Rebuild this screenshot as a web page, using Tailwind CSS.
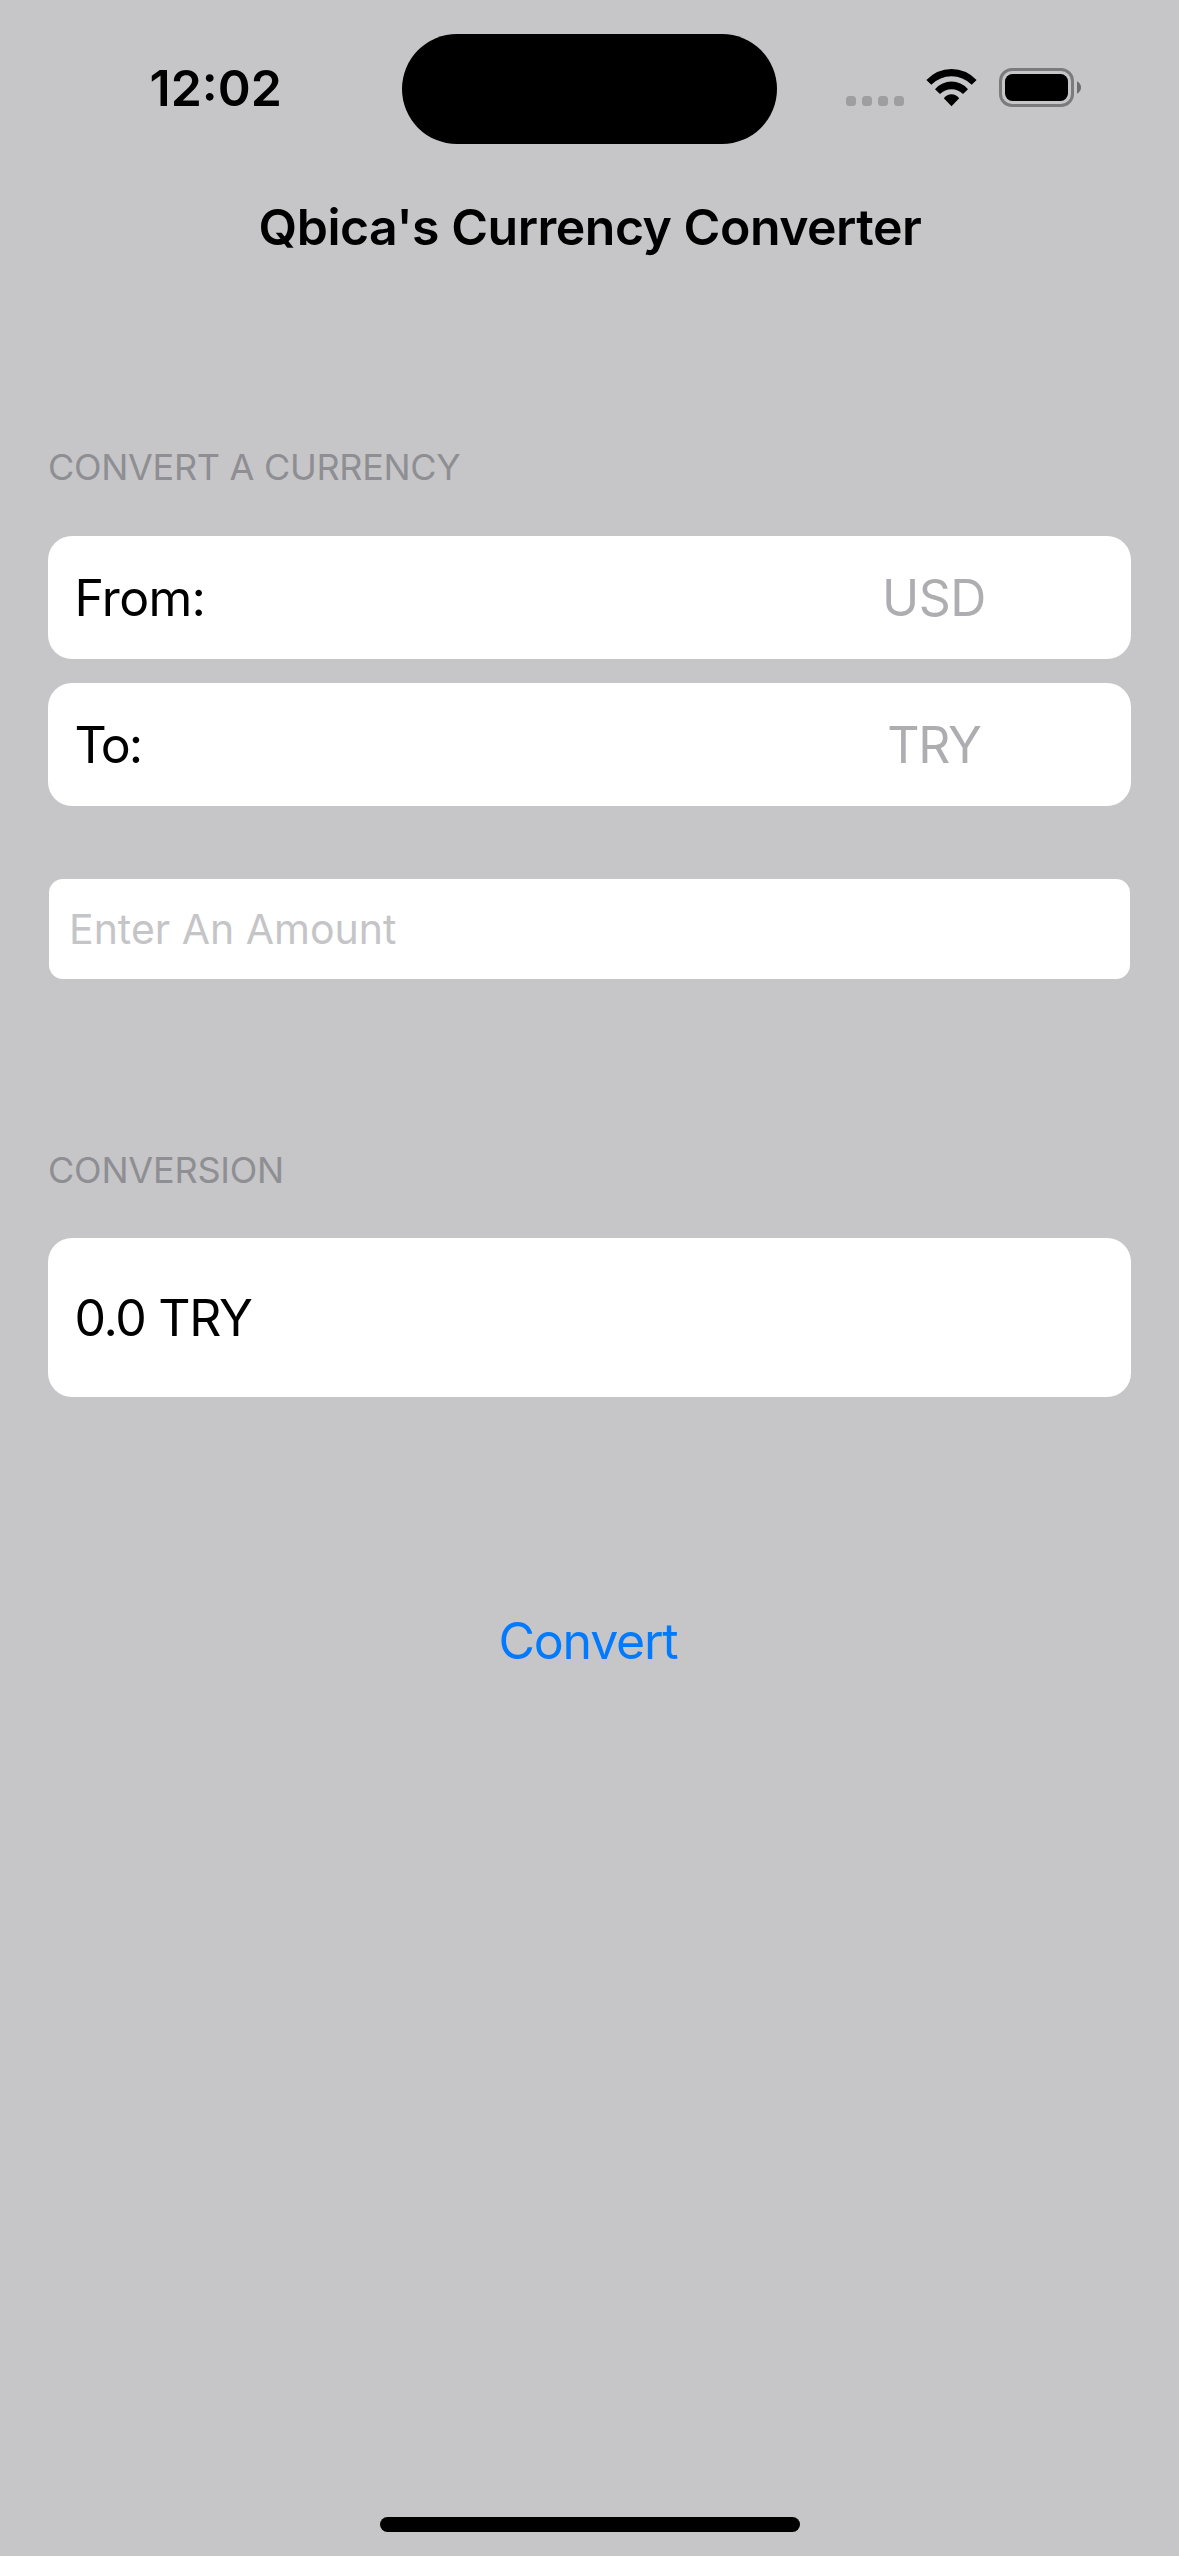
<!DOCTYPE html>
<html lang="en">
<head>
<meta charset="utf-8">
<title>Qbica's Currency Converter</title>
<script src="https://cdn.jsdelivr.net/npm/@tailwindcss/browser@4"></script>
</head>
<body class="bg-[#c6c6c8]">
<div class="relative flex h-[2556px] w-[1179px] flex-col overflow-hidden bg-[#c6c6c8] font-['Inter',sans-serif] text-[50px] leading-[60px] text-black">
  <!-- Status bar -->
  <header class="flex h-[177px] items-start">
    <div class="w-[401.6px] pt-[58px] pl-[149.5px] font-semibold">12:02</div>
    <div class="mt-[33.8px] h-[110.4px] w-[375.8px] rounded-full bg-black"></div>
    <svg class="ml-[68.6px] mt-[60px] h-[56px] w-[260px]" viewBox="846 60 260 56">
      <g fill="#9e9ea0">
        <rect x="846" y="96" width="10" height="10" rx="3.5"/>
        <rect x="862" y="96" width="10" height="10" rx="3.5"/>
        <rect x="878" y="96" width="10" height="10" rx="3.5"/>
        <rect x="894" y="96" width="10" height="10" rx="3.5"/>
      </g>
      <path d="M926.4 80 Q937 69 951.5 69 Q966 69 976.6 80 L971.7 84.8 Q963 76.3 951.5 76.3 Q940 76.3 931.3 84.8 Z"/>
      <path d="M935 89.2 Q942 81.6 951.5 81.6 Q961 81.6 968 89.2 L963 94.1 Q958.2 89.2 951.5 89.2 Q944.8 89.2 940 94.1 Z"/>
      <path d="M943.8 98.2 Q947 94.2 951.5 94.2 Q956 94.2 959.2 98.2 L951.5 106.2 Z"/>
      <rect x="1000.5" y="69.5" width="72" height="36" rx="11.5" fill="none" stroke="#7b7b7d" stroke-width="3"/>
      <rect x="1005" y="74" width="63" height="27" rx="7.5"/>
      <path d="M1077 81.3 Q1081 83.5 1081 87.5 Q1081 91.5 1077 93.7 Z" fill="#6d6d6f"/>
    </svg>
  </header>

  <h1 class="mt-5 pl-px text-center font-semibold tracking-[-0.5px]">Qbica's Currency Converter</h1>

  <main class="flex flex-col px-12">
    <h2 class="mt-[190px] text-[36px] leading-10 tracking-[-0.3px] text-[#8e8e93]">CONVERT A CURRENCY</h2>
    <div class="mt-[49px] flex h-[123px] items-center justify-between rounded-3xl bg-white pl-[26.5px]">
      <span class="tracking-[-0.7px]">From:</span>
      <span class="w-[394px] text-center tracking-[-0.5px] text-[#aeaeb2]">USD</span>
    </div>
    <div class="mt-6 flex h-[123px] items-center justify-between rounded-3xl bg-white pl-[26.5px]">
      <span class="tracking-[-2.1px]">To:</span>
      <span class="w-[394px] text-center tracking-[-1.3px] text-[#aeaeb2]">TRY</span>
    </div>
    <div class="mx-px mt-[73px] flex h-[100px] items-center rounded-[14px] bg-white pl-5 text-[41px] text-[#c5c5c7]">Enter An Amount</div>

    <h2 class="mt-[171px] text-[36px] leading-10 tracking-[-0.2px] text-[#8e8e93]">CONVERSION</h2>
    <div class="mt-12 flex h-[159px] items-center rounded-3xl bg-white pl-[26.5px] tracking-[-1.3px]">0.0 TRY</div>
    <button class="mt-[214px] mr-[3px] self-center tracking-[-1.25px] text-[#007aff]">Convert</button>
  </main>

  <div class="mt-auto mb-6 h-[15px] w-[420px] self-center rounded-full bg-black"></div>
</div>
</body>
</html>
